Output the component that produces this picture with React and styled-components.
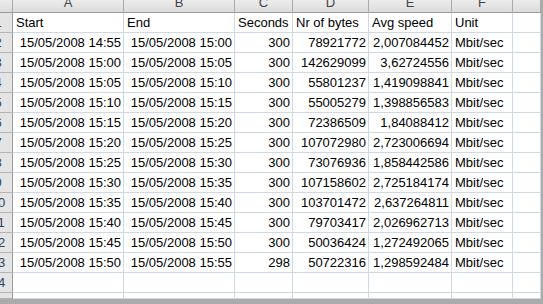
import React from 'react';
import styled, { createGlobalStyle } from 'styled-components';

const GlobalStyle = createGlobalStyle`
    html, body {
        margin: 0;
        padding: 0;
        background: #ffffff;
    }
`;

const Frame = styled.div`
    width: 543px;
    height: 304px;
    box-sizing: border-box;
    padding: 0 2px 5px 0;
    background-color: #ababab;
    overflow: hidden;
`;

const Sheet = styled.div`
    display: grid;
    grid-template-columns: 13px 111px 111px 58px 76px 83px 61px 28px;
    grid-template-rows: 13px repeat(14, 20px) 6px;
    width: 541px;
    height: 299px;
    overflow: hidden;
    background-color: #ffffff;
    font-family: "Liberation Sans", Arial, sans-serif;
    font-size: 13px;
    color: #000000;
`;

const ColHead = styled.div`
    box-sizing: border-box;
    display: flex;
    justify-content: center;
    align-items: flex-start;
    overflow: hidden;
    background: linear-gradient(#ececec, #dcdcdc);
    border-right: 1px solid #a9a9a9;
    border-bottom: 1px solid #9c9c9c;
    color: #444444;
`;

const Letter = styled.span`
    line-height: 13px;
    margin-top: -4px;
`;

const RowHead = styled.div`
    box-sizing: border-box;
    display: flex;
    overflow: hidden;
    background-color: #e4e4e4;
    border-right: 1px solid #9c9c9c;
    border-bottom: 1px solid #b4b4b4;
    color: #30445e;
`;

const RowNum = styled.span`
    flex: 0 0 26px;
    margin-left: -15px;
    text-align: center;
    line-height: 20px;
`;

const Cell = styled.div`
    box-sizing: border-box;
    border-right: 1px solid #d0d7e5;
    border-bottom: 1px solid #d0d7e5;
    padding: 1px 2px 0 3px;
    line-height: 18px;
    white-space: nowrap;
    text-align: ${p => (p.$right ? 'right' : 'left')};
`;

const headers = ['Start', 'End', 'Seconds', 'Nr of bytes', 'Avg speed', 'Unit'];

const times = ['14:55', '15:00', '15:05', '15:10', '15:15', '15:20', '15:25', '15:30', '15:35', '15:40', '15:45', '15:50', '15:55'];

const data = [
    [300, 78921772, '2,007084452'],
    [300, 142629099, '3,62724556'],
    [300, 55801237, '1,419098841'],
    [300, 55005279, '1,398856583'],
    [300, 72386509, '1,84088412'],
    [300, 107072980, '2,723006694'],
    [300, 73076936, '1,858442586'],
    [300, 107158602, '2,725184174'],
    [300, 103701472, '2,637264811'],
    [300, 79703417, '2,026962713'],
    [300, 50036424, '1,272492065'],
    [298, 50722316, '1,298592484'],
];

const rows = [
    headers.map(h => ({ text: h })).concat([{ text: '' }]),
    ...data.map((d, i) => [
        { text: `15/05/2008 ${times[i]}`, right: true },
        { text: `15/05/2008 ${times[i + 1]}`, right: true },
        { text: d[0], right: true },
        { text: d[1], right: true },
        { text: d[2], right: true },
        { text: 'Mbit/sec' },
        { text: '' },
    ]),
    Array(7).fill({ text: '' }),
    Array(7).fill({ text: '' }),
];

export default function App() {
    return <>
        <GlobalStyle />
        <Frame>
            <Sheet>
                <ColHead />
                {['A', 'B', 'C', 'D', 'E', 'F', 'G'].map(l => <ColHead key={l}><Letter>{l === 'G' ? '' : l}</Letter></ColHead>)}
                {rows.map((row, r) => <React.Fragment key={r}>
                    <RowHead><RowNum>{r + 1}</RowNum></RowHead>
                    {row.map((c, i) => <Cell key={i} $right={c.right}>{c.text}</Cell>)}
                </React.Fragment>)}
            </Sheet>
        </Frame>
    </>
}
